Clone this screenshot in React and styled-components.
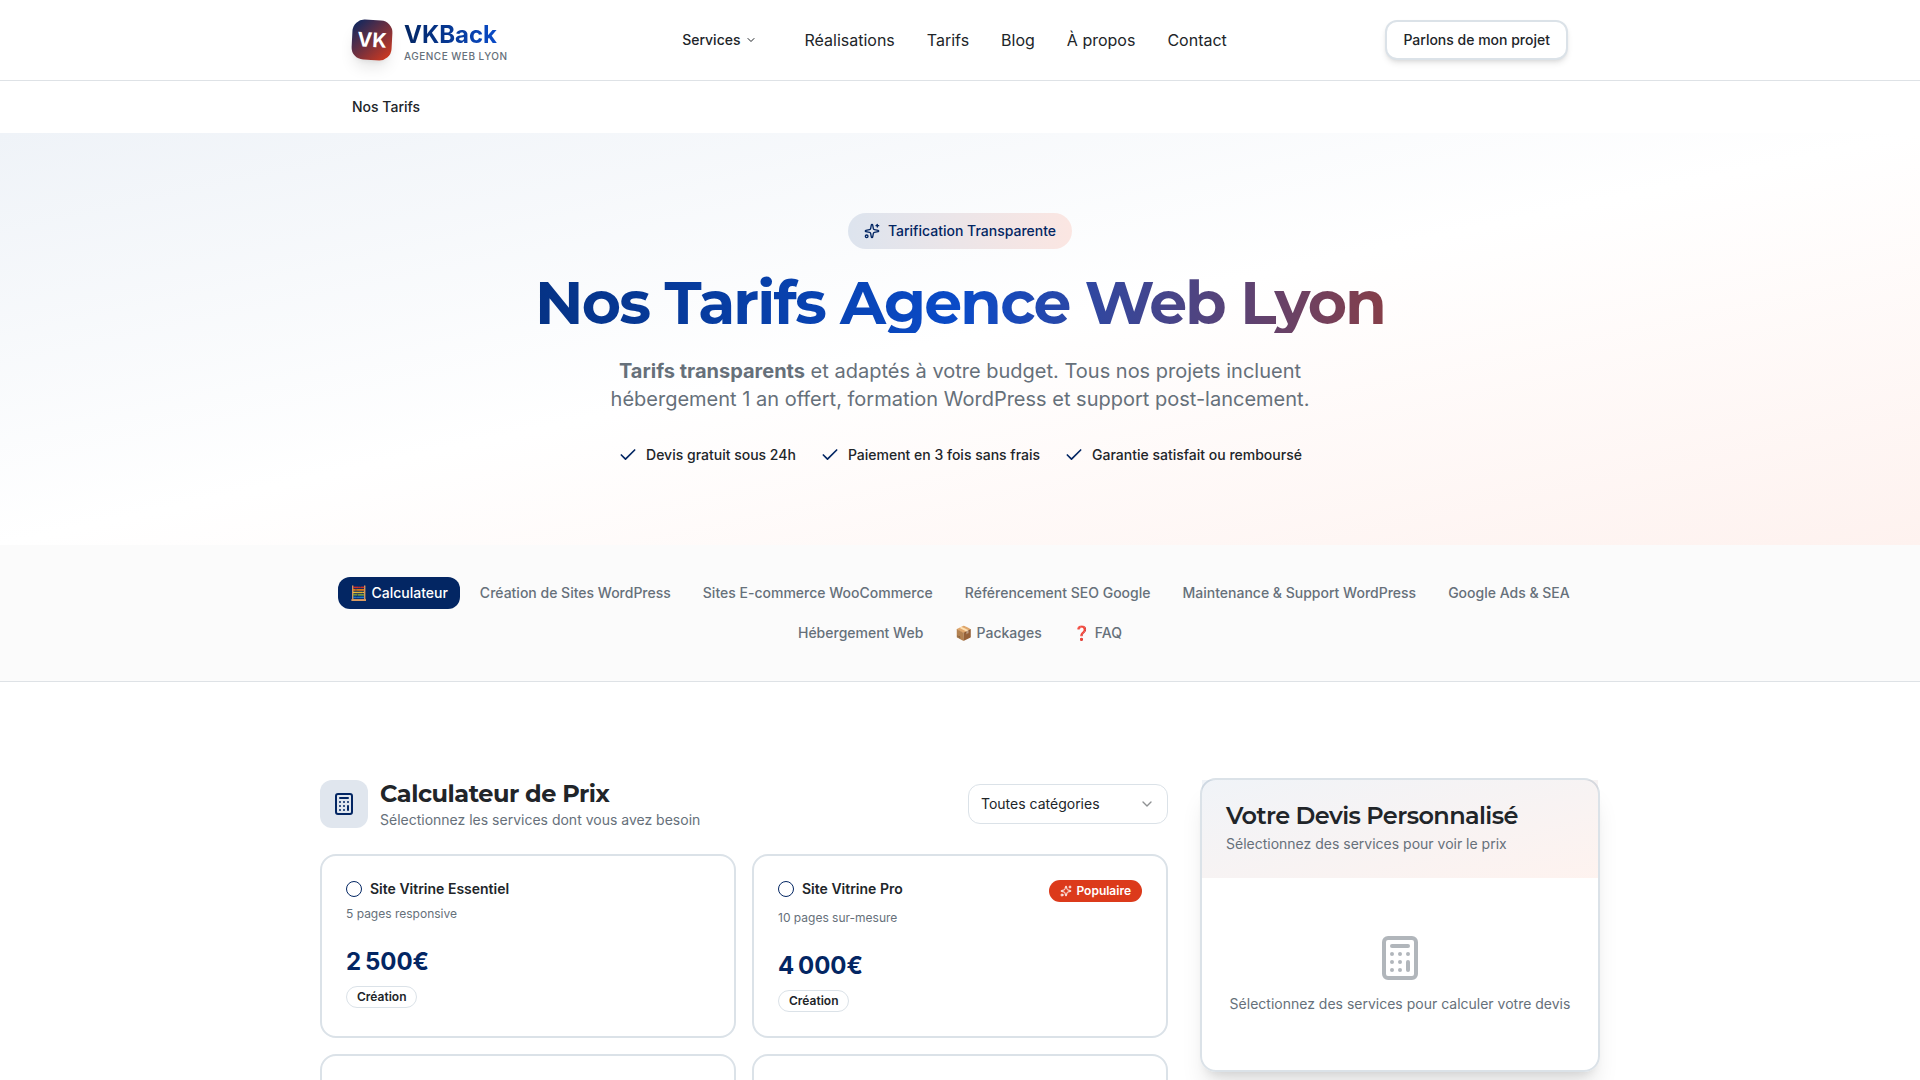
import React, { useState } from "react";
import styled, { createGlobalStyle } from "styled-components";
import { Calculator, Check, ChevronDown, Sparkles } from "lucide-react";

const navLinks = ["Réalisations", "Tarifs", "Blog", "À propos", "Contact"];

const perks = [
  "Devis gratuit sous 24h",
  "Paiement en 3 fois sans frais",
  "Garantie satisfait ou remboursé",
];

const sections = [
  "🧮 Calculateur",
  "Création de Sites WordPress",
  "Sites E-commerce WooCommerce",
  "Référencement SEO Google",
  "Maintenance & Support WordPress",
  "Google Ads & SEA",
  "Hébergement Web",
  "📦 Packages",
  "❓ FAQ",
];

const services = [
  {
    id: "vitrine-essentiel",
    name: "Site Vitrine Essentiel",
    text: "5 pages responsive",
    price: "2\u202f500€",
    category: "Création",
  },
  {
    id: "vitrine-pro",
    name: "Site Vitrine Pro",
    text: "10 pages sur-mesure",
    price: "4\u202f000€",
    category: "Création",
    popular: true,
  },
];

const App = () => {
  const [active, setActive] = useState(sections[0]);
  const [selected, setSelected] = useState([]);

  const toggle = (id) => {
    setSelected((list) =>
      list.includes(id) ? list.filter((item) => item !== id) : [...list, id]
    );
  };

  return (
    <>
      <GlobalStyle />
      <Header>
        <HeaderInner>
          <Logo href="#">
            <LogoMark>VK</LogoMark>
            <span>
              <LogoName>VKBack</LogoName>
              <LogoTag>Agence Web Lyon</LogoTag>
            </span>
          </Logo>
          <Nav>
            <MenuButton type="button">
              Services
              <ChevronDown size={12} />
            </MenuButton>
            {navLinks.map((link) => (
              <NavLink href="#" key={link}>
                {link}
              </NavLink>
            ))}
          </Nav>
          <ContactButton type="button">Parlons de mon projet</ContactButton>
        </HeaderInner>
      </Header>

      <Breadcrumb aria-label="Fil d'Ariane">Nos Tarifs</Breadcrumb>

      <Hero>
        <HeroBadge>
          <Sparkles size={16} />
          Tarification Transparente
        </HeroBadge>
        <HeroTitle>Nos Tarifs Agence Web Lyon</HeroTitle>
        <HeroText>
          <strong>Tarifs transparents</strong> et adaptés à votre budget. Tous
          nos projets incluent hébergement 1 an offert, formation WordPress et
          support post-lancement.
        </HeroText>
        <Perks>
          {perks.map((perk) => (
            <li key={perk}>
              <Check size={20} />
              {perk}
            </li>
          ))}
        </Perks>
      </Hero>

      <SectionBar>
        <SectionList>
          {sections.map((section) => (
            <SectionButton
              type="button"
              key={section}
              $active={section === active}
              onClick={() => setActive(section)}
            >
              {section}
            </SectionButton>
          ))}
        </SectionList>
      </SectionBar>

      <Main>
        <section>
          <CalcHeader>
            <CalcIcon>
              <Calculator size={24} />
            </CalcIcon>
            <CalcHeading>
              <CalcTitle>Calculateur de Prix</CalcTitle>
              <Muted>Sélectionnez les services dont vous avez besoin</Muted>
            </CalcHeading>
            <SelectWrap>
              <Select aria-label="Catégorie">
                <option>Toutes catégories</option>
              </Select>
              <ChevronDown size={16} />
            </SelectWrap>
          </CalcHeader>
          <Cards>
            {services.map((service) => (
              <Card key={service.id}>
                <CardTop>
                  <CardLabel>
                    <Tick
                      type="checkbox"
                      checked={selected.includes(service.id)}
                      onChange={() => toggle(service.id)}
                    />
                    {service.name}
                  </CardLabel>
                  {service.popular && (
                    <Popular>
                      <Sparkles size={12} />
                      Populaire
                    </Popular>
                  )}
                </CardTop>
                <CardText>{service.text}</CardText>
                <Price>{service.price}</Price>
                <Tag>{service.category}</Tag>
              </Card>
            ))}
            <Card />
            <Card />
          </Cards>
        </section>

        <Quote>
          <QuoteHeader>
            <QuoteTitle>Votre Devis Personnalisé</QuoteTitle>
            <Muted>Sélectionnez des services pour voir le prix</Muted>
          </QuoteHeader>
          <QuoteEmpty>
            <Calculator size={48} />
            <Muted>Sélectionnez des services pour calculer votre devis</Muted>
          </QuoteEmpty>
        </Quote>
      </Main>
    </>
  );
};

export default App;

const GlobalStyle = createGlobalStyle`
  *, *::before, *::after {
    box-sizing: border-box;
  }
  body {
    margin: 0;
    background: #ffffff;
    color: #212529;
    font-family: Inter, "Noto Color Emoji", sans-serif;
    font-size: 16px;
    line-height: 24px;
  }
  h1, h2, p, ul {
    margin: 0;
    padding: 0;
  }
  button, select {
    font-family: inherit;
    color: inherit;
    cursor: pointer;
  }
  a {
    color: inherit;
    text-decoration: none;
  }
  svg {
    flex-shrink: 0;
  }
`;

const Header = styled.header`
  border-bottom: 1px solid #dee2e6;
`;

const HeaderInner = styled.div`
  display: flex;
  align-items: center;
  justify-content: space-between;
  max-width: 1280px;
  height: 80px;
  margin: 0 auto;
  padding: 0 32px;
`;

const Logo = styled.a`
  display: flex;
  align-items: center;
  gap: 12px;
`;

const LogoMark = styled.span`
  display: flex;
  align-items: center;
  justify-content: center;
  width: 40px;
  height: 40px;
  border-radius: 12px;
  background: linear-gradient(to bottom right, #032663, #dc3a1b);
  box-shadow: 0 10px 15px -3px rgba(0, 0, 0, 0.1),
    0 4px 6px -4px rgba(0, 0, 0, 0.1);
  color: #ffffff;
  font-size: 20px;
  font-weight: 700;
  transform: rotate(3deg);
`;

const LogoName = styled.span`
  display: block;
  width: max-content;
  background: linear-gradient(to right, #032663, #0a4bc8);
  background-clip: text;
  color: transparent;
  font-size: 24px;
  font-weight: 700;
  line-height: 32px;
`;

const LogoTag = styled.span`
  display: block;
  color: #66707a;
  font-size: 10px;
  font-weight: 500;
  line-height: 10px;
  letter-spacing: 0.05em;
  text-transform: uppercase;
`;

const Nav = styled.nav`
  display: flex;
  align-items: center;
  gap: 32px;
`;

const MenuButton = styled.button`
  display: flex;
  align-items: center;
  gap: 4px;
  height: 40px;
  padding: 0 16px;
  border: none;
  background: none;
  font-size: 14px;
  font-weight: 500;
  line-height: 20px;
`;

const NavLink = styled.a`
  font-size: 16px;
`;

const ContactButton = styled.button`
  height: 40px;
  padding: 0 16px;
  border: 2px solid #dbe2e8;
  border-radius: 12px;
  background: #ffffff;
  box-shadow: 0 4px 6px -1px rgba(0, 0, 0, 0.1),
    0 2px 4px -2px rgba(0, 0, 0, 0.1);
  font-size: 14px;
  font-weight: 500;
  line-height: 20px;
`;

const Breadcrumb = styled.nav`
  max-width: 1280px;
  margin: 0 auto;
  padding: 16px 32px;
  font-size: 14px;
  font-weight: 500;
  line-height: 20px;
`;

const Hero = styled.section`
  display: flex;
  flex-direction: column;
  align-items: center;
  padding: 80px 32px;
  background: linear-gradient(to bottom right, #eff3f8, #ffffff 50%, #fef2ef);
  text-align: center;
`;

const HeroBadge = styled.div`
  display: flex;
  align-items: center;
  gap: 8px;
  padding: 8px 16px;
  border-radius: 18px;
  background: linear-gradient(to right, #dde4ee, #fbe6e2);
  color: #032663;
  font-size: 14px;
  font-weight: 500;
  line-height: 20px;
`;

const HeroTitle = styled.h1`
  width: 100%;
  max-width: 1280px;
  margin-top: 24px;
  background: linear-gradient(to right, #032663, #0a4bc8, #c43808);
  background-clip: text;
  color: transparent;
  font-family: Montserrat, Inter, sans-serif;
  font-size: 60px;
  font-weight: 700;
  line-height: 60px;
  letter-spacing: -0.03em;
`;

const HeroText = styled.p`
  max-width: 768px;
  margin-top: 24px;
  color: #66707a;
  font-size: 20px;
  line-height: 28px;
`;

const Perks = styled.ul`
  display: flex;
  flex-wrap: wrap;
  justify-content: center;
  gap: 24px;
  margin-top: 32px;
  font-size: 14px;
  font-weight: 500;
  line-height: 20px;
  list-style: none;
  li {
    display: flex;
    gap: 8px;
  }
  svg {
    color: #032663;
  }
`;

const SectionBar = styled.nav`
  padding: 32px 16px;
  border-bottom: 1px solid #dee2e6;
  background: #fbfbfb;
`;

const SectionList = styled.div`
  display: flex;
  flex-wrap: wrap;
  justify-content: center;
  gap: 8px;
  max-width: 1280px;
  margin: 0 auto;
`;

const SectionButton = styled.button`
  height: 32px;
  padding: 0 12px;
  border: none;
  border-radius: 12px;
  background: ${(props) => (props.$active ? "#032663" : "transparent")};
  && {
    color: ${(props) => (props.$active ? "#ffffff" : "#66707a")};
  }
  font-size: 14px;
  font-weight: 500;
  line-height: 20px;
`;

const Main = styled.main`
  display: grid;
  grid-template-columns: minmax(0, 1fr) 400px;
  align-items: start;
  gap: 32px;
  max-width: 1280px;
  margin: 0 auto;
  padding: 96px 0;
`;

const Muted = styled.p`
  color: #66707a;
  font-size: 14px;
  line-height: 20px;
`;

const CalcHeader = styled.div`
  display: flex;
  align-items: center;
  gap: 12px;
  margin-bottom: 24px;
`;

const CalcIcon = styled.div`
  display: flex;
  align-items: center;
  justify-content: center;
  width: 48px;
  height: 48px;
  border-radius: 12px;
  background: #e0e6ee;
  color: #032663;
`;

const CalcHeading = styled.div`
  flex: 1;
`;

const CalcTitle = styled.h2`
  font-family: Montserrat, Inter, sans-serif;
  font-size: 24px;
  font-weight: 700;
  line-height: 32px;
  letter-spacing: -0.02em;
`;

const SelectWrap = styled.div`
  position: relative;
  width: 200px;
  svg {
    position: absolute;
    top: 12px;
    right: 13px;
    opacity: 0.5;
    pointer-events: none;
  }
`;

const Select = styled.select`
  width: 100%;
  height: 40px;
  padding: 0 12px;
  border: 1px solid #dbe2e8;
  border-radius: 12px;
  background: #ffffff;
  appearance: none;
  font-size: 14px;
  line-height: 20px;
`;

const Cards = styled.div`
  display: grid;
  grid-template-columns: 1fr 1fr;
  gap: 16px;
`;

const Card = styled.article`
  min-height: 184px;
  padding: 24px;
  border: 2px solid #dbe2e8;
  border-radius: 16px;
`;

const CardTop = styled.div`
  display: flex;
  align-items: flex-start;
  justify-content: space-between;
`;

const CardLabel = styled.label`
  display: flex;
  align-items: center;
  gap: 8px;
  font-size: 14px;
  font-weight: 600;
  line-height: 18px;
`;

const Tick = styled.input`
  width: 16px;
  height: 16px;
  margin: 0;
  border: 1px solid #032663;
  border-radius: 50%;
  appearance: none;
  &:checked {
    background: #032663;
  }
`;

const Popular = styled.span`
  display: flex;
  align-items: center;
  gap: 4px;
  padding: 3px 11px;
  border-radius: 11px;
  background: #dc3a1b;
  color: #ffffff;
  font-size: 12px;
  font-weight: 600;
  line-height: 16px;
`;

const CardText = styled.p`
  margin-top: 8px;
  color: #66707a;
  font-size: 12px;
  line-height: 16px;
`;

const Price = styled.p`
  margin: 24px 0 8px;
  color: #032663;
  font-size: 24px;
  font-weight: 700;
  line-height: 32px;
`;

const Tag = styled.span`
  display: block;
  width: max-content;
  padding: 2px 10px;
  border: 1px solid #dbe2e8;
  border-radius: 11px;
  font-size: 12px;
  font-weight: 600;
  line-height: 16px;
`;

const Quote = styled.aside`
  border: 2px solid #dbe2e8;
  border-radius: 16px;
  box-shadow: 0 20px 25px -5px rgba(0, 0, 0, 0.1),
    0 8px 10px -6px rgba(0, 0, 0, 0.1);
`;

const QuoteHeader = styled.div`
  display: flex;
  flex-direction: column;
  gap: 6px;
  padding: 24px;
  background: linear-gradient(
    to bottom right,
    rgba(3, 60, 130, 0.06),
    rgba(240, 80, 30, 0.07)
  );
`;

const QuoteTitle = styled.h2`
  font-family: Montserrat, Inter, sans-serif;
  font-size: 24px;
  font-weight: 600;
  line-height: 24px;
  letter-spacing: -0.025em;
`;

const QuoteEmpty = styled.div`
  display: flex;
  flex-direction: column;
  align-items: center;
  gap: 12px;
  padding: 56px 24px;
  color: #66707a;
  text-align: center;
  svg {
    opacity: 0.5;
  }
`;
